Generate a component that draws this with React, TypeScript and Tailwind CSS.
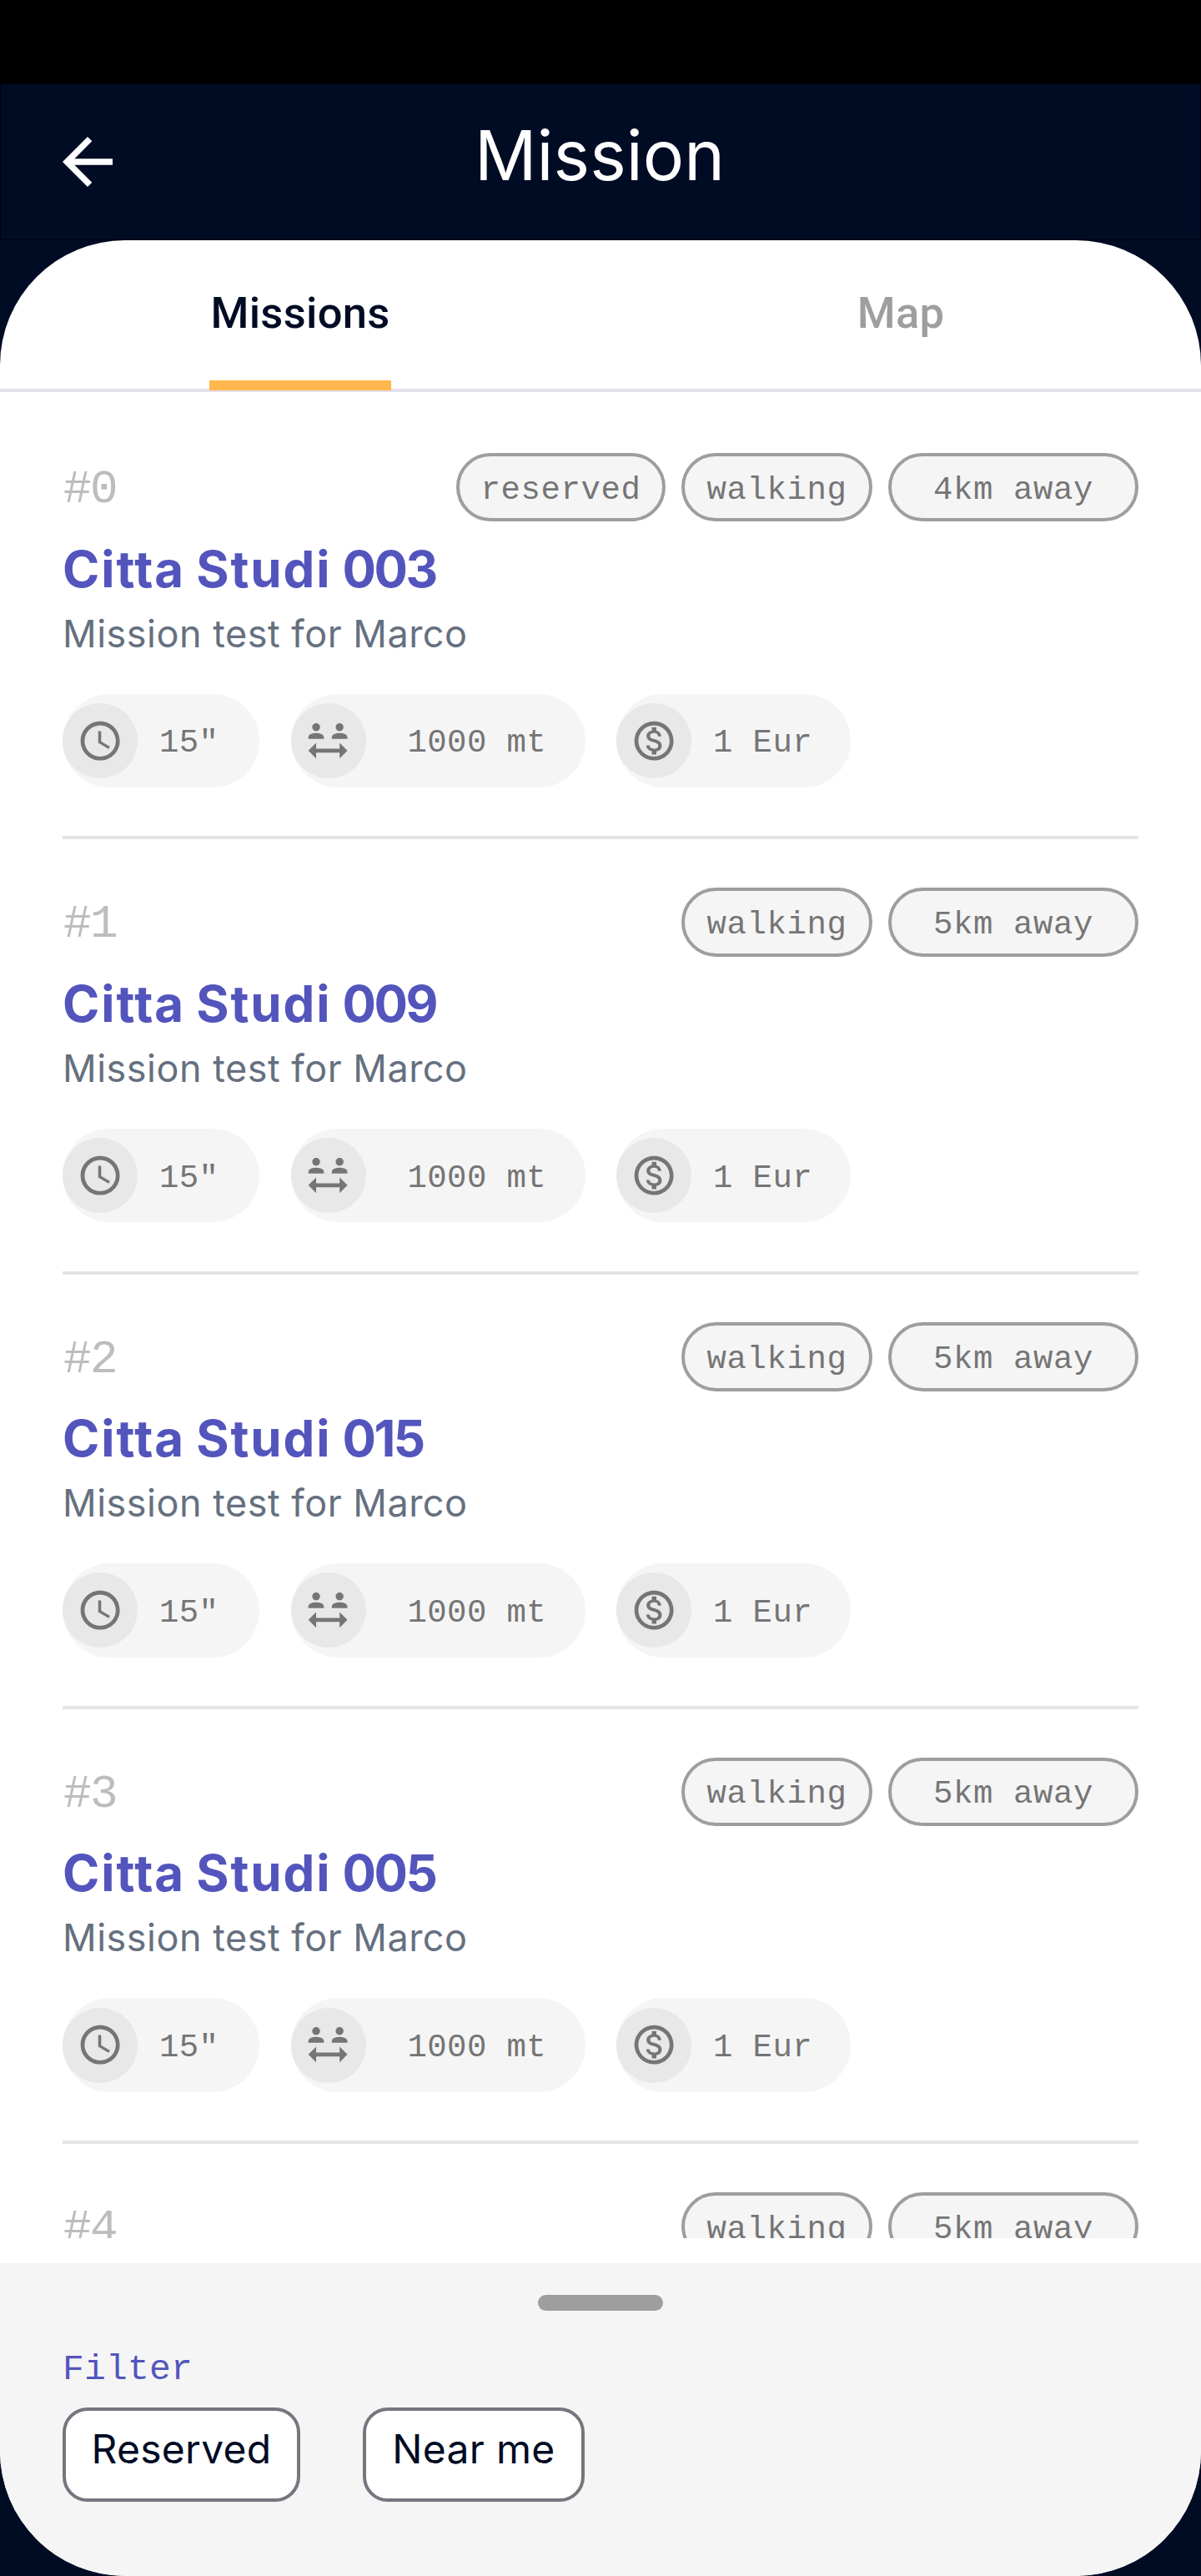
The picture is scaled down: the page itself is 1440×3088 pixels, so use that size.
import type { ReactNode } from "react";
import {
  MdArrowBack,
  MdOutlineAccessTime,
  MdOutlineMonetizationOn,
  MdSocialDistance,
} from "react-icons/md";

type Mission = { area: string; code: string; distance: string; reserved?: boolean };

const missions: Mission[] = [
  { area: "Citta Studi", code: "003", distance: "4km away", reserved: true },
  { area: "Citta Studi", code: "009", distance: "5km away" },
  { area: "Citta Studi", code: "015", distance: "5km away" },
  { area: "Citta Studi", code: "005", distance: "5km away" },
];

function Chip({ width, children }: { width: string; children: ReactNode }) {
  return (
    <span
      className={`${width} flex h-[82.5px] items-center justify-center rounded-full border-4 border-[#9e9e9e] bg-[#f5f5f5] pt-2 font-['Liberation_Mono',monospace] text-[39px] leading-none tracking-[0.6px] whitespace-pre text-[#757575]`}
    >
      {children}
    </span>
  );
}

function Stat({
  width,
  gap,
  icon,
  children,
}: {
  width: string;
  gap: string;
  icon: ReactNode;
  children: ReactNode;
}) {
  return (
    <div className={`${width} ${gap} flex h-[112.5px] items-center rounded-full bg-[#f5f5f5]`}>
      <span className="flex size-[90px] shrink-0 items-center justify-center rounded-full bg-[#e8e8e8] text-[56.25px] text-[#757575]">
        {icon}
      </span>
      <span className="pt-2 font-['Liberation_Mono',monospace] text-[39px] leading-none tracking-[0.4px] whitespace-pre text-[#757575]">
        {children}
      </span>
    </div>
  );
}

function MissionHeader({ index, distance, reserved }: { index: number; distance: string; reserved?: boolean }) {
  return (
    <div className="flex h-[83px] shrink-0 items-center justify-between">
      <span className="pt-1.5 pl-px font-['Liberation_Mono',monospace] text-[56px] leading-none tracking-[-1.5px] text-[#bdbdbd]">
        #{index}
      </span>
      <div className="flex gap-[19px]">
        {reserved && <Chip width="w-[251px]">reserved</Chip>}
        <Chip width="w-[229px]">walking</Chip>
        <Chip width="w-[300px]">{distance}</Chip>
      </div>
    </div>
  );
}

function MissionItem({ mission, index }: { mission: Mission; index: number }) {
  return (
    <li className="flex h-[521.25px] shrink-0 flex-col border-b-4 border-[#e4e4e4] pt-[57.5px]">
      <MissionHeader index={index} distance={mission.distance} reserved={mission.reserved} />
      <h2 className="mt-[18px] font-['Inter',sans-serif] text-[60px] leading-[76px] font-[650] tracking-[1.9px] text-[#5355bd] [word-spacing:-3px]">
        {mission.area} <span className="tracking-[-2.5px]">{mission.code}</span>
      </h2>
      <p className="mt-[10px] font-['Inter',sans-serif] text-[45px] leading-[60px] tracking-[0.5px] text-[#65707f]">
        Mission test for Marco
      </p>
      <div className="mt-[42px] flex gap-[37.5px]">
        <Stat width="w-[236px]" gap="gap-[26px]" icon={<MdOutlineAccessTime />}>
          15"
        </Stat>
        <Stat width="w-[353px]" gap="gap-[50px]" icon={<MdSocialDistance />}>
          1000 mt
        </Stat>
        <Stat width="w-[281px]" gap="gap-[26px]" icon={<MdOutlineMonetizationOn />}>
          1 Eur
        </Stat>
      </div>
    </li>
  );
}

function FilterButton({ width, children }: { width: string; children: ReactNode }) {
  return (
    <button
      className={`${width} flex h-[112.5px] items-center justify-center rounded-[30px] border-4 border-[#79747e] bg-white pb-3 font-['Inter',sans-serif] text-[48px] leading-none tracking-[0.3px] text-[#000b24]`}
    >
      {children}
    </button>
  );
}

export default function App() {
  return (
    <div className="flex h-[3088px] w-[1440px] flex-col overflow-hidden bg-[#000b24]">
      <div className="h-[100px] shrink-0 bg-black" />
      <header className="flex h-[188px] shrink-0 items-center border border-[#000010] pl-[59px]">
        <MdArrowBack className="size-[90px] text-white" />
        <h1 className="flex-1 pb-4 text-center font-['Inter',sans-serif] text-[82.5px] leading-none font-normal text-white">
          Mission
        </h1>
        <div className="w-[151px]" />
      </header>

      <main className="flex flex-1 flex-col overflow-hidden rounded-[150px] bg-white">
        <nav className="flex h-[182px] shrink-0 border-b-4 border-[#e6e0ec] font-['Roboto',sans-serif] text-[52.5px] leading-[174px] font-medium tracking-[0.3px]">
          <div className="flex flex-1 justify-center text-[#000b24]">
            <div className="relative w-[218px] text-center">
              Missions
              <span className="absolute -bottom-0.5 left-0 h-3 w-full bg-[#ffb74d]" />
            </div>
          </div>
          <div className="flex-1 text-center text-[#9e9e9e]">Map</div>
        </nav>

        <ul className="flex h-[2213px] shrink-0 flex-col overflow-hidden px-[75px] pt-[15px]">
          {missions.map((mission, index) => (
            <MissionItem key={mission.code} mission={mission} index={index} />
          ))}
          <li className="shrink-0 pt-[57.5px]">
            <MissionHeader index={4} distance="5km away" />
          </li>
        </ul>

        <section className="mt-[30px] flex flex-1 flex-col bg-[#f5f5f5] px-[75px]">
          <div className="mt-[38px] h-[19px] w-[150px] self-center rounded-full bg-[#9e9e9e]" />
          <p className="mt-[43px] font-['Liberation_Mono',monospace] text-[43px] leading-[56px] tracking-[0.2px] text-[#5355bd]">
            Filter
          </p>
          <div className="mt-[17px] flex gap-[75px]">
            <FilterButton width="w-[285px]">Reserved</FilterButton>
            <FilterButton width="w-[266px]">Near me</FilterButton>
          </div>
        </section>
      </main>
    </div>
  );
}
